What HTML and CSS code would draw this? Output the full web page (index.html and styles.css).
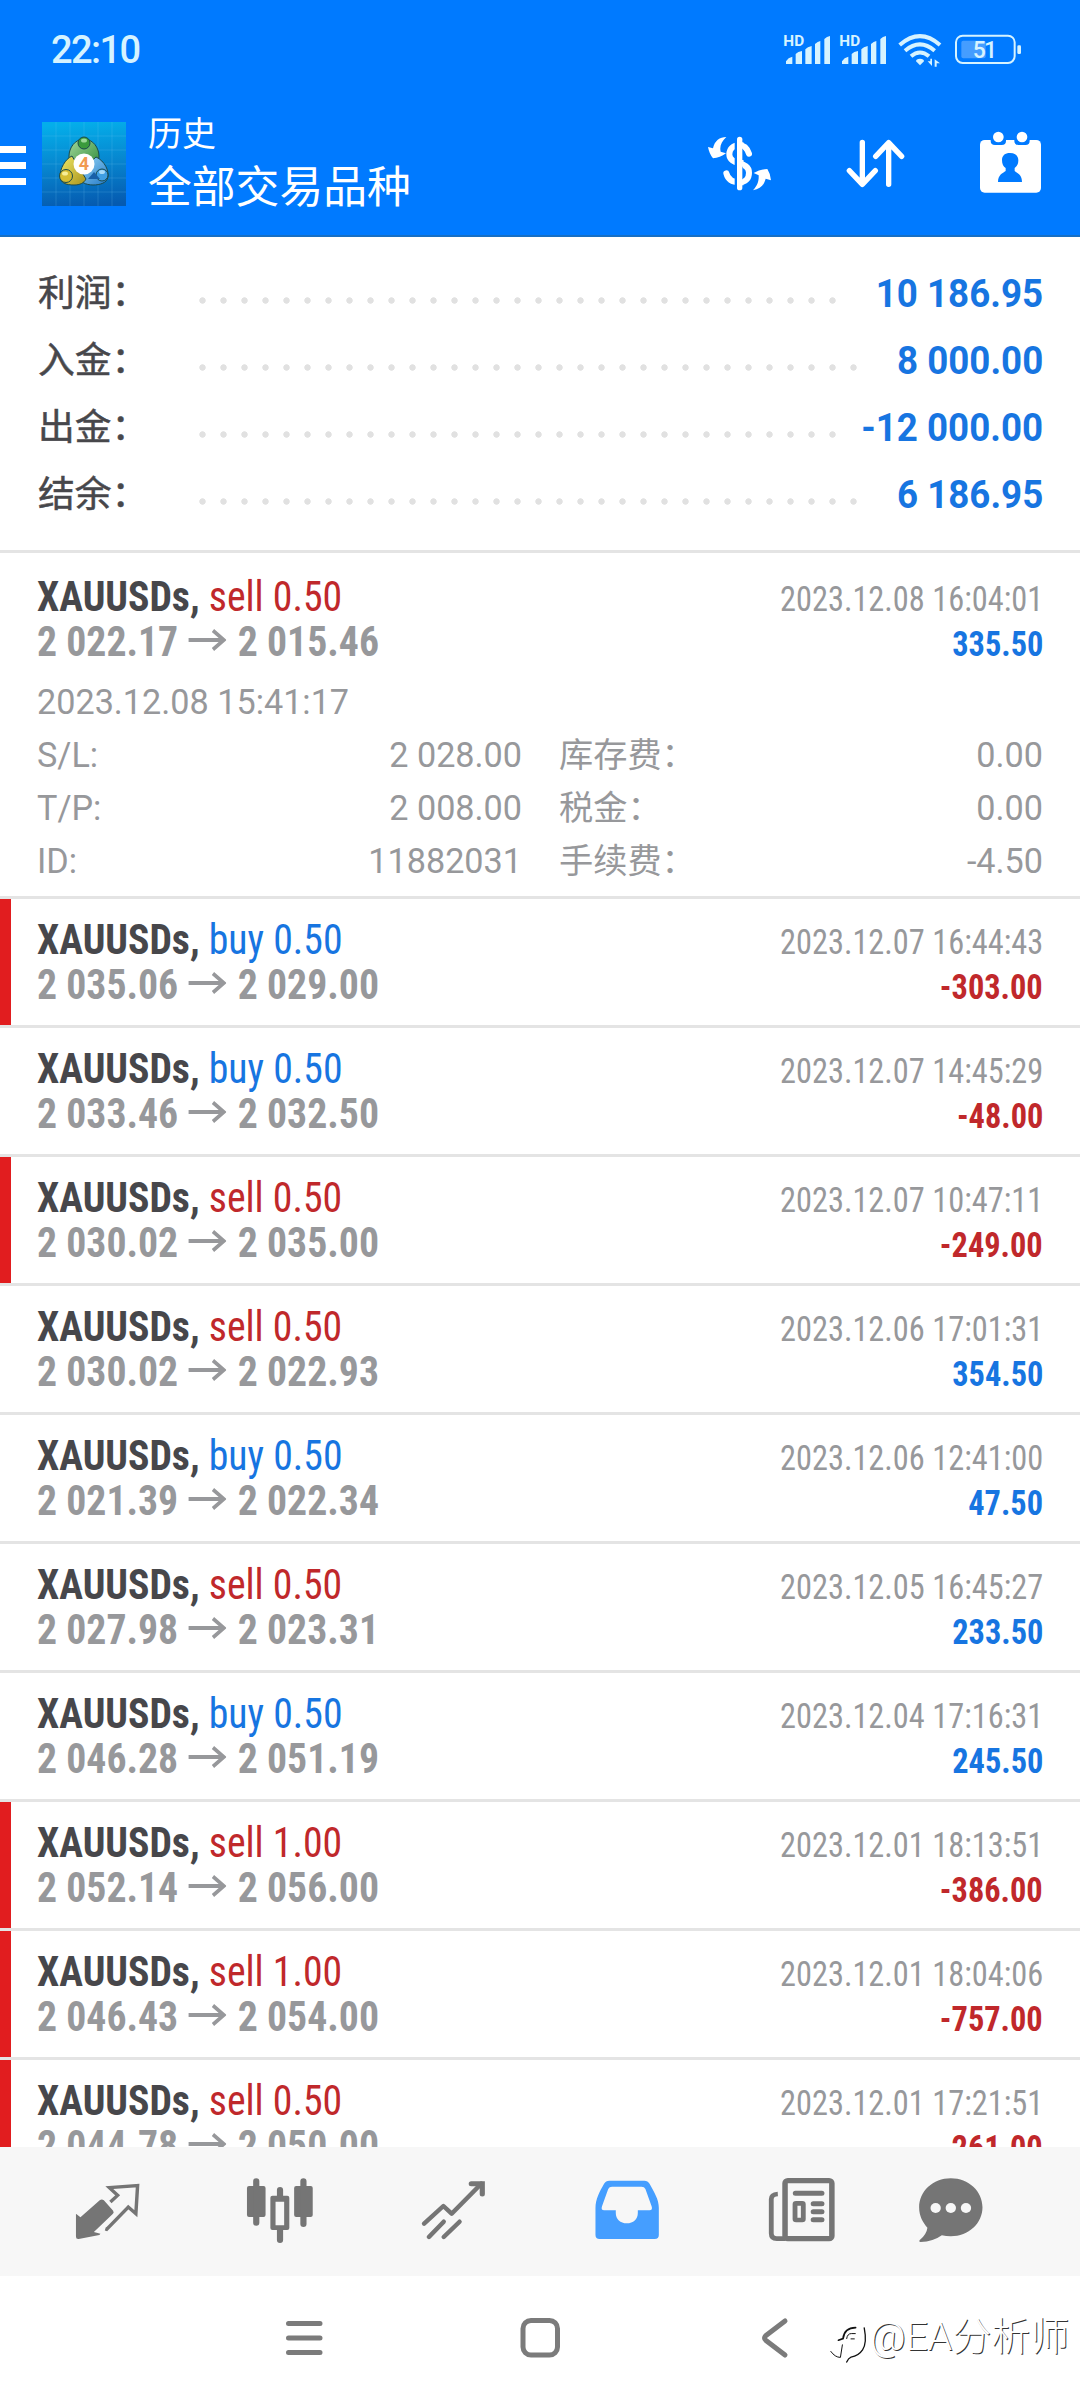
FILE: index.html
```html
<!DOCTYPE html>
<html lang="zh-CN">
<head>
<meta charset="utf-8">
<title>历史</title>
<link rel="stylesheet" href="styles.css">
</head>
<body>
<header class="top">
  <div class="status">
    <span class="clock">22:10</span>
    <svg class="status-icons" viewBox="306 96 720 108" width="240" height="36">
      <g fill="#d6f3ff">
        <g id="signal">
          <text class="hd" x="310" y="137">HD</text>
          <path d="M318 184l8-9 11-5v22h-19zM347 162l8-6 11-3v39h-19zM376 148l8-6 11-4v54h-19zM405 132l8-6 8-3v69h-16zM433 117l8-6 9-3v84h-17z"/>
        </g>
        <use href="#signal" x="168"/>
        <path d="M720 196l-12-12q0-8 12-8t12 8z"/>
        <path d="M743 184l8 0v-8h5v22zM764 200v-22l16 12h-10v10z"/>
        <rect x="1012" y="136" width="11" height="26" rx="4"/>
      </g>
      <g fill="none" stroke="#d6f3ff" stroke-width="12">
        <path d="M659 135q61-53 121 0M675 152q45-38 89 0M693 169q27-23 54 0"/>
        <rect x="828" y="107" width="176" height="82" rx="20" stroke-width="6"/>
      </g>
      <rect x="844" y="122" width="73" height="53" rx="6" fill="#459dff"/>
      <text class="battery" x="878" y="174">51</text>
    </svg>
  </div>
  <div class="appbar">
    <div class="menu"><i></i><i></i><i></i></div>
    <svg class="logo" viewBox="0 0 84 84" width="84" height="84">
      <defs>
        <linearGradient id="sky" x1=".5" y1="0" x2=".6" y2="1"><stop offset="0" stop-color="#04aeea"/><stop offset=".5" stop-color="#0785ce"/><stop offset="1" stop-color="#055ab0"/></linearGradient>
        <linearGradient id="leaf" x2="1" y2="1"><stop offset="0" stop-color="#a4d89c"/><stop offset="1" stop-color="#2c8a36"/></linearGradient>
        <linearGradient id="sun" x2="1" y2="1"><stop offset="0" stop-color="#f0e968"/><stop offset="1" stop-color="#a8931c"/></linearGradient>
        <linearGradient id="sea" x2="1" y2="1"><stop offset="0" stop-color="#9edcf8"/><stop offset="1" stop-color="#2178c8"/></linearGradient>
      </defs>
      <path fill="url(#sky)" d="M0 0h84v84H0z"/>
      <path d="M14 0v84M28 0v84M42 0v84M56 0v84M70 0v84M0 14h84M0 28h84M0 42h84M0 56h84M0 70h84" stroke="#7cc8f4" stroke-opacity=".2" fill="none"/>
      <g stroke="#1b4a4c" stroke-width="1">
        <path fill="url(#leaf)" d="M42 17c9 0 15 9 15 17 0 6-1 9-3 13H30c-2-4-3-8-3-13 0-8 6-17 15-17z"/>
        <path fill="url(#sea)" d="M54 35c9 4 13 14 12 20s-8 8-15 8-14-3-16-10z"/>
        <path fill="url(#sun)" d="M30 34c-7 3-12 13-12 20s6 9 14 9c6 0 10-2 12-6z"/>
        <circle cx="42" cy="21" r="6" fill="#3a9a3c"/>
        <circle cx="24" cy="54" r="6.500" fill="#d5bd32"/>
        <circle cx="60" cy="53" r="6" fill="#3f9ee2"/>
      </g>
      <path d="M52 50l6 7H46z" fill="#1860a8"/>
      <circle cx="42" cy="42" r="10.500" fill="#fff"/>
      <ellipse cx="42" cy="18.500" rx="3" ry="2" fill="#9bd897"/>
      <ellipse cx="23" cy="51.500" rx="3" ry="2" fill="#f7ee97"/>
      <ellipse cx="60" cy="50" rx="3" ry="2" fill="#a8daf8"/>
      <text class="four" x="42" y="48">4</text>
    </svg>
    <div class="titles"><div class="title">历史</div><div class="subtitle">全部交易品种</div></div>
    <svg class="act-money" viewBox="78 390 201 189" width="67" height="63" fill="none">
      <path d="M207 461C200 441 190 436 178 436C160 436 148 446 148 463C148 497 207 482 207 518C207 536 196 547 178 547C158 547 144 540 139 520" stroke="#fff" stroke-width="18" stroke-linecap="round"/>
      <path d="M164 404h24v172h-24z" fill="#007aff"/>
      <path d="M179 418v145" stroke="#fff" stroke-width="16" stroke-linecap="round"/>
      <path d="M188 427v19M188 480v20M188 538v18" stroke="#fff" stroke-width="5"/>
      <path d="M139 411C119 411 104 422 99 445L84 441Q88 462 99 475Q120 473 138 460L122 455C118 438 125 424 139 411zM219 571C240 567 252 556 257 536L273 541Q272 522 262 507Q242 507 221 519L236 526C237 545 232 557 219 571z" fill="#fff"/>
    </svg>
    <svg class="act-sort" viewBox="495 414 183 153" width="61" height="51" fill="none" stroke="#fff" stroke-width="16" stroke-linecap="round" stroke-linejoin="round">
      <path d="M547 427v125M508 512l39 41 39-41M626 553V428M587 469l39-41 39 41"/>
    </svg>
    <svg class="act-cal" viewBox="894 390 195 192" width="65" height="64">
      <rect x="900" y="420" width="183" height="158" rx="14" fill="#fff"/>
      <path d="M932 414h46v8q0 13-13 13h-20q-13 0-13-13zM1003 414h46v8q0 13-13 13h-20q-13 0-13-13z" fill="#007aff"/>
      <circle cx="955" cy="411" r="16" fill="#fff"/><circle cx="1026" cy="411" r="16" fill="#fff"/>
      <path d="M990 459c15 0 25 8 25 22 0 13-5 18-11 23v9c8 7 22 10 22 33h-72c0-22 14-26 23-33v-9c-7-5-11-11-11-24 0-13 9-21 24-21z" fill="#007aff"/>
    </svg>
  </div>
</header>

<section class="summary">
  <div class="sum"><span class="label">利润：</span><i class="dots short"></i><b>10 186.95</b></div>
  <div class="sum"><span class="label">入金：</span><i class="dots"></i><b>8 000.00</b></div>
  <div class="sum"><span class="label">出金：</span><i class="dots short"></i><b>-12 000.00</b></div>
  <div class="sum"><span class="label">结余：</span><i class="dots"></i><b>6 186.95</b></div>
</section>

<svg width="0" height="0" class="defs"><defs>
  <symbol id="arrow" viewBox="0 0 40 24"><path d="M0 12h37M26 2.500l11.500 9.500-11.500 9.500" fill="none" stroke="#97989b" stroke-width="3.800"/></symbol>
</defs></svg>

<main class="deals">
  <article class="deal open">
    <div class="line"><span><b class="sym">XAUUSDs,</b> <span class="sell">sell 0.50</span></span><time>2023.12.08 16:04:01</time></div>
    <div class="line"><span class="px">2 022.17<svg><use href="#arrow"/></svg>2 015.46</span><b class="gain">335.50</b></div>
    <div class="details">
      <span class="wide">2023.12.08 15:41:17</span>
      <span>S/L:</span><span class="val">2 028.00</span><span class="cjk">库存费：</span><span class="val">0.00</span>
      <span>T/P:</span><span class="val">2 008.00</span><span class="cjk">税金：</span><span class="val">0.00</span>
      <span>ID:</span><span class="val">11882031</span><span class="cjk">手续费：</span><span class="val">-4.50</span>
    </div>
  </article>
  <article class="deal mark">
    <div class="line"><span><b class="sym">XAUUSDs,</b> <span class="buy">buy 0.50</span></span><time>2023.12.07 16:44:43</time></div>
    <div class="line"><span class="px">2 035.06<svg><use href="#arrow"/></svg>2 029.00</span><b class="loss">-303.00</b></div>
  </article>
  <article class="deal">
    <div class="line"><span><b class="sym">XAUUSDs,</b> <span class="buy">buy 0.50</span></span><time>2023.12.07 14:45:29</time></div>
    <div class="line"><span class="px">2 033.46<svg><use href="#arrow"/></svg>2 032.50</span><b class="loss">-48.00</b></div>
  </article>
  <article class="deal mark">
    <div class="line"><span><b class="sym">XAUUSDs,</b> <span class="sell">sell 0.50</span></span><time>2023.12.07 10:47:11</time></div>
    <div class="line"><span class="px">2 030.02<svg><use href="#arrow"/></svg>2 035.00</span><b class="loss">-249.00</b></div>
  </article>
  <article class="deal">
    <div class="line"><span><b class="sym">XAUUSDs,</b> <span class="sell">sell 0.50</span></span><time>2023.12.06 17:01:31</time></div>
    <div class="line"><span class="px">2 030.02<svg><use href="#arrow"/></svg>2 022.93</span><b class="gain">354.50</b></div>
  </article>
  <article class="deal">
    <div class="line"><span><b class="sym">XAUUSDs,</b> <span class="buy">buy 0.50</span></span><time>2023.12.06 12:41:00</time></div>
    <div class="line"><span class="px">2 021.39<svg><use href="#arrow"/></svg>2 022.34</span><b class="gain">47.50</b></div>
  </article>
  <article class="deal">
    <div class="line"><span><b class="sym">XAUUSDs,</b> <span class="sell">sell 0.50</span></span><time>2023.12.05 16:45:27</time></div>
    <div class="line"><span class="px">2 027.98<svg><use href="#arrow"/></svg>2 023.31</span><b class="gain">233.50</b></div>
  </article>
  <article class="deal">
    <div class="line"><span><b class="sym">XAUUSDs,</b> <span class="buy">buy 0.50</span></span><time>2023.12.04 17:16:31</time></div>
    <div class="line"><span class="px">2 046.28<svg><use href="#arrow"/></svg>2 051.19</span><b class="gain">245.50</b></div>
  </article>
  <article class="deal mark">
    <div class="line"><span><b class="sym">XAUUSDs,</b> <span class="sell">sell 1.00</span></span><time>2023.12.01 18:13:51</time></div>
    <div class="line"><span class="px">2 052.14<svg><use href="#arrow"/></svg>2 056.00</span><b class="loss">-386.00</b></div>
  </article>
  <article class="deal mark">
    <div class="line"><span><b class="sym">XAUUSDs,</b> <span class="sell">sell 1.00</span></span><time>2023.12.01 18:04:06</time></div>
    <div class="line"><span class="px">2 046.43<svg><use href="#arrow"/></svg>2 054.00</span><b class="loss">-757.00</b></div>
  </article>
  <article class="deal mark">
    <div class="line"><span><b class="sym">XAUUSDs,</b> <span class="sell">sell 0.50</span></span><time>2023.12.01 17:21:51</time></div>
    <div class="line"><span class="px">2 044.78<svg><use href="#arrow"/></svg>2 050.00</span><b class="loss">-261.00</b></div>
  </article>
</main>

<nav class="tabs">
  <svg viewBox="208.500 345 203.300 210" preserveAspectRatio="none">
    <path d="M220 461l13 11 56-51q6-5 12 0l27 31q4 6-2 11l-54 53 19 5-3 4-60 12q-8 1-8-7z" fill="#757575"/>
    <path d="M305 507l4 1 63-67 22 20 5-84-82 6 24 23-21 20" fill="none" stroke="#757575" stroke-width="10"/>
  </svg>
  <svg viewBox="712.300 345 203.300 210" preserveAspectRatio="none" fill="#757575">
    <rect x="718" y="378" width="54" height="93" rx="6"/><rect x="855" y="378" width="54" height="93" rx="6"/>
    <path d="M745 364v124M882 364v128M814 390v20M814 508v32" stroke="#757575" stroke-width="18" stroke-linecap="round"/>
    <path fill-rule="evenodd" d="M792 407h43q6 0 6 6v91q0 6-6 6h-43q-6 0-6-6v-91q0-6 6-6zm9 18v71h25v-71z"/>
  </svg>
  <svg viewBox="1216.200 345 203.300 210" preserveAspectRatio="none" fill="none" stroke="#757575" stroke-width="13" stroke-linecap="round" stroke-linejoin="round">
    <path d="M1231 491l56-53 24 23 86-90M1288 485l-43 46M1334 485l-46 46"/>
    <path d="M1368 371h32v31" stroke-width="15" stroke-linejoin="miter"/>
  </svg>
  <svg viewBox="151.900 345 203.300 210" preserveAspectRatio="none">
    <path fill="#459eff" fill-rule="evenodd" d="M202 362h102q10 0 15 9c13 24 27 47 27 72v82q0 12-12 12H174q-12 0-12-12v-82c0-25 12-49 25-72q5-9 15-9zm8 18q-8 0-11 7l-18 52q-4 12 6 12h34v8c0 18 13 31 32 31s32-13 32-31v-8h34q10 0 6-12l-18-52q-3-7-11-7z"/>
  </svg>
  <svg viewBox="655.700 345 203.300 210" preserveAspectRatio="none" fill="none" stroke="#757575">
    <rect x="711" y="362" width="136" height="174" rx="8" stroke-width="16"/>
    <path d="M690 402q-19 1-19 16v102q0 16 16 16h25" stroke-width="14"/>
    <path d="M741 400h77M793 431h25M793 455h25M793 479h25" stroke-width="15" stroke-linecap="round"/>
    <rect x="740" y="430" width="24" height="50" rx="3" stroke-width="14"/>
  </svg>
  <svg viewBox="1089 345 203.300 210" preserveAspectRatio="none">
    <path d="M1193 355c52 0 92 39 92 87s-40 87-92 87q-14 0-26-3-25 19-62 20-6-1-2-6 20-18 22-37c-13-15-24-34-24-61 0-48 40-87 92-87z" fill="#757575"/>
    <g fill="#f7f7f7"><circle cx="1149" cy="444" r="15"/><circle cx="1193" cy="444" r="15"/><circle cx="1237" cy="444" r="15"/></g>
  </svg>
</nav>

<footer class="sysnav">
  <svg viewBox="0 0 60 60"><path d="M14.500 15.500h31.500M14.500 30h31.500M14.500 44.500h31.500"/></svg>
  <svg viewBox="0 0 60 60"><rect x="13" y="12.500" width="34.500" height="34.500" rx="8"/></svg>
  <svg viewBox="0 0 60 60"><path d="M39 13L20 27.500q-3 2.500 0 5L39 47"/></svg>
  <div class="credit">
    <svg viewBox="30 70 120 130" width="40" height="43" fill="none" stroke="#111" stroke-linecap="round">
      <path d="M32 156q13 18 29 18l6-38" stroke-width="3"/>
      <path d="M55 122l14-5q4-33 38-33" stroke-width="5"/>
      <path d="M80 117q2-15 14-15h12M93 118h10" stroke-width="3"/>
      <path d="M133 85q9 46-5 66-12 18-35 22-8 3-13 15" stroke-width="4"/>
    </svg><span>@EA分析师</span>
  </div>
</footer>
</body>
</html>
```
FILE: styles.css
```css
* { box-sizing: border-box; }
body {
  margin: 0;
  width: 1080px;
  height: 2400px;
  overflow: hidden;
  display: flex;
  flex-direction: column;
  background: #fff;
  color: #47474b;
  font-family: Roboto, "Noto Sans CJK SC", sans-serif;
}
svg { display: block; }
.defs { position: absolute; }

.top {
  height: 237px;
  background: #007aff;
  border-bottom: 2px solid #176fc4;
  color: #fff;
}
.status {
  height: 100px;
  padding: 0 58px 0 51px;
  display: flex;
  justify-content: space-between;
  align-items: center;
}
.clock {
  font-size: 38px;
  font-weight: 500;
  letter-spacing: -1.600px;
  color: #d6f3ff;
}
.hd { font: bold 46px Roboto, sans-serif; }
.battery { font: 500 69px Roboto, sans-serif; fill: #d6f3ff; letter-spacing: -5px; }
.appbar { display: flex; height: 135px; padding-right: 37px; }
.menu { width: 26px; padding-top: 46px; display: grid; gap: 9px; align-content: start; }
.menu i { height: 7px; background: #fff; }
.logo { margin: 22px 0 0 16px; }
.four { font: bold 18px Roboto, sans-serif; fill: #f19a50; text-anchor: middle; }
.titles { margin: 14px auto 0 22px; }
.title { font-size: 34px; line-height: 40px; }
.subtitle { font-size: 43.800px; line-height: 62px; margin-top: 3px; }
.act-money { margin-top: 30px; }
.act-sort { margin: 38px 0 0 72px; }
.act-cal { margin: 30px 0 0 72px; }

.summary {
  height: 316px;
  padding: 22px 37px 0 38px;
  border-bottom: 3px solid #e4e4e4;
}
.sum { height: 67px; display: flex; align-items: center; font-size: 36.750px; }
.label {
  width: 154px;
  margin-top: -5px;
  -webkit-text-stroke: .5px #47474b;
  white-space: nowrap;
}
.dots {
  width: 672px;
  height: 7px;
  margin-top: 15px;
  background: radial-gradient(circle at 10.500px 3.500px, #e1e1e1 2.800px, transparent 3.600px) 0 0 / 21px 7px;
}
.dots.short { width: 651px; }
.sum b {
  margin: 2px 0 0 auto;
  font-size: 38px;
  color: #1775e1;
  white-space: nowrap;
  transform: scaleX(.967);
  transform-origin: right;
}

.deals { flex: 1; min-height: 0; overflow: hidden; }
.deal {
  height: 129px;
  padding: 18px 37px 0;
  border-bottom: 3px solid #e4e4e4;
  font-stretch: 75%;
  font-family: "Roboto Condensed", Roboto, sans-serif;
}
.deal.open { height: 346px; padding-top: 21px; }
.deal.mark { background: linear-gradient(#e11d1f, #e11d1f) 0 0 / 11px 100% no-repeat; }
.line {
  height: 45px;
  display: flex;
  justify-content: space-between;
  align-items: baseline;
  font-size: 42px;
  line-height: 45px;
  white-space: nowrap;
}
/* the app's condensed face is slightly narrower than the installed one */
.line > * { transform: scaleX(.946); transform-origin: right; }
.line > :first-child { transform-origin: left; }
.sell { color: #c0282b; }
.buy { color: #1775e1; }
.line time { font-size: 34.200px; color: #97989b; }
.gain, .loss { font-size: 34.200px; color: #1775e1; }
.loss { color: #c0282b; }
.px { font-weight: 700; color: #97989b; }
.px svg { display: inline-block; width: 40px; height: 24px; margin: 0 12px 0 11px; vertical-align: 4px; }
.details {
  display: grid;
  grid-template-columns: 150px 335px 190px 1fr;
  grid-auto-rows: 53px;
  margin-top: 12px;
  font-family: Roboto, "Noto Sans CJK SC", sans-serif;
  font-stretch: 100%;
  font-size: 34.200px;
  line-height: 53px;
  color: #97989b;
  white-space: nowrap;
}
.wide { grid-column: 1 / -1; }
.val { text-align: right; }
.cjk { padding-left: 37px; }

.tabs {
  height: 129px;
  padding: 28px 0 0 20px;
  display: grid;
  grid-template-columns: repeat(5, 173.500px) 125px;
  justify-items: center;
  align-items: start;
  background: #f7f7f7;
}
.tabs svg { width: 70px; height: 70px; }

.sysnav {
  position: relative;
  height: 124px;
  padding: 32px 0 0 274px;
  display: flex;
  gap: 176px;
}
.sysnav > svg {
  width: 60px;
  height: 60px;
  fill: none;
  stroke: #7b7b7b;
  stroke-width: 5px;
  stroke-linecap: round;
}
.credit {
  position: absolute;
  left: 830px;
  top: 36px;
  display: flex;
  font-size: 39px;
  font-weight: 300;
  line-height: 50px;
  color: #fff;
  white-space: nowrap;
  text-shadow: 1px 1px 0 #333;
}
.credit svg { margin: 11px 0 0 0; }
```
